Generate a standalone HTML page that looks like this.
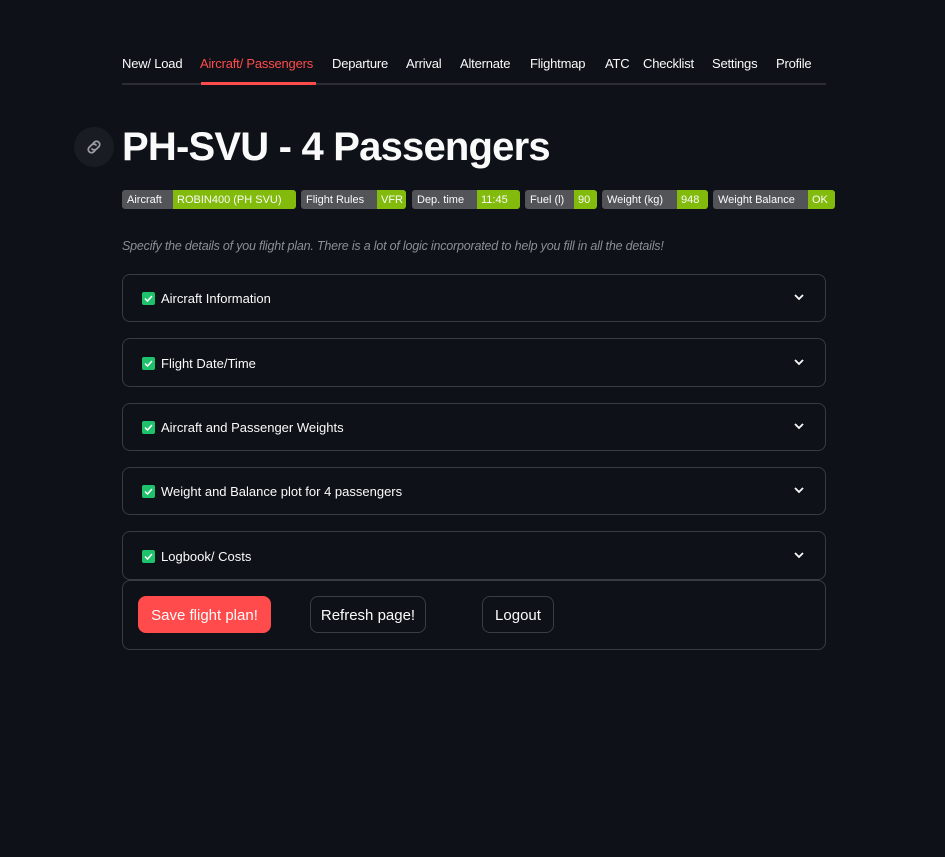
<!DOCTYPE html>
<html><head><meta charset="utf-8"><style>
*{box-sizing:border-box;margin:0;padding:0}
body{width:945px;height:857px;background:#0e1117;color:#fafafa;font-family:"Liberation Sans",sans-serif;position:relative;overflow:hidden}
.nav{position:absolute;top:56px;font-size:13px;white-space:nowrap;letter-spacing:-0.2px}
.navline{position:absolute;left:122px;top:83px;width:704px;height:2px;background:#2b2d33}
.navred{position:absolute;left:201px;top:82px;width:115px;height:3px;background:#ff4b4b}
.icon{position:absolute;left:74px;top:127px;width:40px;height:40px;border-radius:50%;background:#1a1c23}
h1{position:absolute;left:122px;top:125px;font-size:40px;font-weight:bold;white-space:nowrap;letter-spacing:-0.8px}
.b{position:absolute;top:190px;height:19px;display:flex;font-size:11px;line-height:20px;border-radius:3px;overflow:hidden;white-space:nowrap}
.b span{background:#535458;padding:0 0 0 5px;flex:none}
.b i{font-style:normal;background:#82bb0c;flex:1;padding-left:4px}
.desc{position:absolute;left:122px;top:239px;font-size:12.5px;font-style:italic;color:#8b8e95;white-space:nowrap;letter-spacing:-0.2px}
.exp{position:absolute;left:122px;width:704px;border:1px solid #393b43;border-radius:8px;font-size:13px}
.exp .cb{position:absolute;left:19px;top:50%;margin-top:-6px;width:13px;height:13px;background:#1ec26a;border-radius:2px}
.exp .t{position:absolute;left:38px;top:50%;margin-top:-7px;line-height:16px;white-space:nowrap}
.exp svg.ch{position:absolute;right:20px;top:50%;margin-top:-7px}
.btn{position:absolute;top:596px;height:37px;border-radius:8px;font-size:15px;line-height:37px;text-align:center;border:1px solid #3b3d45;background:#0e1117}
</style></head><body>
<div class="nav" style="left:122px">New/ Load</div>
<div class="nav" style="left:200px;color:#ff4b4b">Aircraft/ Passengers</div>
<div class="nav" style="left:332px">Departure</div>
<div class="nav" style="left:406px">Arrival</div>
<div class="nav" style="left:460px">Alternate</div>
<div class="nav" style="left:530px">Flightmap</div>
<div class="nav" style="left:605px">ATC</div>
<div class="nav" style="left:643px">Checklist</div>
<div class="nav" style="left:712px">Settings</div>
<div class="nav" style="left:776px">Profile</div>
<div class="navline"></div><div class="navred"></div>
<div class="icon"><svg width="40" height="40" viewBox="0 0 40 40" fill="none" stroke="#9a9ca2" stroke-width="1.8" stroke-linecap="round"><path d="M19 16.5l1.5-1.5a3.2 3.2 0 0 1 4.5 4.5l-2.5 2.5a3.2 3.2 0 0 1-4.5 0"/><path d="M21 23.5l-1.5 1.5a3.2 3.2 0 0 1-4.5-4.5l2.5-2.5a3.2 3.2 0 0 1 4.5 0"/></svg></div>
<h1>PH-SVU - 4 Passengers</h1>
<div class="b" style="left:122px;width:174px"><span style="width:51px">Aircraft</span><i>ROBIN400 (PH SVU)</i></div>
<div class="b" style="left:301px;width:105px"><span style="width:76px">Flight Rules</span><i>VFR</i></div>
<div class="b" style="left:412px;width:108px"><span style="width:65px">Dep. time</span><i>11:45</i></div>
<div class="b" style="left:525px;width:72px"><span style="width:49px">Fuel (l)</span><i>90</i></div>
<div class="b" style="left:602px;width:106px"><span style="width:75px">Weight (kg)</span><i>948</i></div>
<div class="b" style="left:713px;width:122px"><span style="width:95px">Weight Balance</span><i>OK</i></div>
<div class="desc">Specify the details of you flight plan. There is a lot of logic incorporated to help you fill in all the details!</div>

<div class="exp" style="top:274px;height:48px"><div class="cb"></div><svg style="position:absolute;left:19px;top:17px" width="13" height="13"><path d="M3 6.5l2.5 2.5 4.5-5" stroke="#fff" stroke-width="1.5" fill="none"/></svg><div class="t">Aircraft Information</div><svg class="ch" width="12" height="12"><path d="M2 4l4 4 4-4" stroke="#fafafa" stroke-width="1.8" fill="none"/></svg></div>
<div class="exp" style="top:338px;height:49px"><div class="cb"></div><svg style="position:absolute;left:19px;top:18px" width="13" height="13"><path d="M3 6.5l2.5 2.5 4.5-5" stroke="#fff" stroke-width="1.5" fill="none"/></svg><div class="t">Flight Date/Time</div><svg class="ch" width="12" height="12"><path d="M2 4l4 4 4-4" stroke="#fafafa" stroke-width="1.8" fill="none"/></svg></div>
<div class="exp" style="top:403px;height:48px"><div class="cb"></div><svg style="position:absolute;left:19px;top:17px" width="13" height="13"><path d="M3 6.5l2.5 2.5 4.5-5" stroke="#fff" stroke-width="1.5" fill="none"/></svg><div class="t">Aircraft and Passenger Weights</div><svg class="ch" width="12" height="12"><path d="M2 4l4 4 4-4" stroke="#fafafa" stroke-width="1.8" fill="none"/></svg></div>
<div class="exp" style="top:467px;height:48px"><div class="cb"></div><svg style="position:absolute;left:19px;top:17px" width="13" height="13"><path d="M3 6.5l2.5 2.5 4.5-5" stroke="#fff" stroke-width="1.5" fill="none"/></svg><div class="t">Weight and Balance plot for 4 passengers</div><svg class="ch" width="12" height="12"><path d="M2 4l4 4 4-4" stroke="#fafafa" stroke-width="1.8" fill="none"/></svg></div>
<div class="exp" style="top:531px;height:49px"><div class="cb"></div><svg style="position:absolute;left:19px;top:18px" width="13" height="13"><path d="M3 6.5l2.5 2.5 4.5-5" stroke="#fff" stroke-width="1.5" fill="none"/></svg><div class="t">Logbook/ Costs</div><svg class="ch" width="12" height="12"><path d="M2 4l4 4 4-4" stroke="#fafafa" stroke-width="1.8" fill="none"/></svg></div>
<div class="exp" style="top:580px;height:70px"></div>
<div class="btn" style="left:138px;width:133px;background:#ff4b4b;border-color:#ff4b4b">Save flight plan!</div>
<div class="btn" style="left:310px;width:116px">Refresh page!</div>
<div class="btn" style="left:482px;width:72px">Logout</div>
</body></html>
